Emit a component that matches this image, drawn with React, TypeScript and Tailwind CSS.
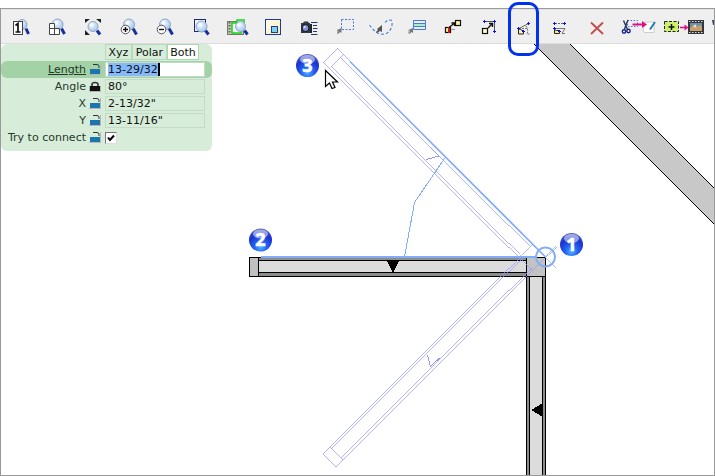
import { useEffect, useRef, type ReactNode } from 'react'

function Lens({ x, y, hx, hy, r = 5 }: { x: number; y: number; hx: number; hy: number; r?: number }) {
  return (
    <g>
      <line x1={x + 4} y1={y + 4} x2={hx - 1} y2={hy - 1} stroke="#15309a" strokeWidth="3" />
      <circle cx={x} cy={y} r={r} fill="url(#glass)" stroke="#90a4c8" strokeWidth="1" />
      <circle cx={x - 1.5} cy={y - 1.5} r="1.8" fill="#fff" opacity="0.8" />
    </g>
  )
}

function Plus({ x, y }: { x: number; y: number }) {
  return (
    <g fill="#0a12e8" shapeRendering="crispEdges">
      <rect x={x - 1} y={y} width="3" height="1" />
      <rect x={x} y={y - 1} width="1" height="3" />
    </g>
  )
}

function MiniCursor({ x, y }: { x: number; y: number }) {
  return (
    <g>
      <path d={`M${x + 5} ${y}v5l-1.5-1-2 2-1.2-1.2 1.8-1.8-1.6-1z`} fill="#777" />
      <path d={`M${x + 1} ${y + 1.5}v4`} stroke="#aaa" />
    </g>
  )
}

type Tool = { name: string; wide?: boolean; ringed?: boolean; art: ReactNode }

const tools: Tool[] = [
  {
    name: 'Actual size',
    art: (
      <>
        <Lens x={13} y={9.5} hx={20.5} hy={20} />
        <rect x="4.5" y="6.5" width="9" height="13" fill="#fff" stroke="#444" />
        <path d="M6.5 10.5l2.5-2v8.5M6.5 17h5" stroke="#111" strokeWidth="1.7" fill="none" />
      </>
    ),
  },
  {
    name: 'Zoom grid',
    art: (
      <>
        <Lens x={12.5} y={9.5} hx={20.5} hy={20} r={5.5} />
        <path d="M4.5 8.5h5v5h5v6h-10zM9.5 13.5v6M4.5 13.5h5" fill="#fff" stroke="#444" />
      </>
    ),
  },
  {
    name: 'Fit in window',
    art: (
      <>
        <Lens x={12} y={11.5} hx={20} hy={20.5} />
        <path d="M4 4h5l-5 4zM20 4h-5l5 4zM4 20v-5l5 5z" fill="#222" />
      </>
    ),
  },
  {
    name: 'Zoom in',
    art: (
      <>
        <Lens x={12} y={9.5} hx={20.5} hy={20.5} r={5.5} />
        <circle cx="8.5" cy="14.5" r="4.3" fill="#fff" stroke="#555" />
        <path d="M6 14.5h5M8.5 12v5" stroke="#111" strokeWidth="1.4" />
      </>
    ),
  },
  {
    name: 'Zoom out',
    art: (
      <>
        <Lens x={12} y={9.5} hx={20.5} hy={20.5} r={5.5} />
        <circle cx="8.5" cy="14.5" r="4.3" fill="#fff" stroke="#555" />
        <path d="M6 14.5h5" stroke="#111" strokeWidth="1.4" />
      </>
    ),
  },
  {
    name: 'Zoom window',
    art: (
      <>
        <rect x="5.5" y="4.5" width="11" height="12" fill="#f4f6ff" stroke="#1b2a70" />
        <Lens x={12.5} y={11.5} hx={20.5} hy={20.5} r={5.5} />
      </>
    ),
  },
  {
    name: 'Zoom plan view',
    art: (
      <>
        <rect x="2.5" y="6.5" width="16" height="13" fill="#c9c8b4" stroke="#77786a" />
        <path d="M4.5 7v12" stroke="#666" strokeWidth="2" strokeDasharray="1.5 1.5" />
        <rect x="7" y="8" width="9" height="10" fill="#f5fff2" stroke="#12d61c" strokeWidth="1.5" />
        <rect x="12" y="5" width="7" height="6" fill="#f5fff2" stroke="#12d61c" strokeWidth="1.5" />
        <Lens x={15.5} y={11.5} hx={23.5} hy={20.5} r={5} />
      </>
    ),
  },
  {
    name: 'Overview',
    art: (
      <>
        <rect x="4.5" y="4.5" width="15" height="15" fill="url(#cream)" stroke="#1d3d91" />
        <rect x="10.5" y="11.5" width="6" height="6" fill="#79d2f2" stroke="#1d3d91" />
      </>
    ),
  },
  {
    name: 'Camera',
    art: (
      <>
        <path d="M4 8h2l1-1.500h4l1 1.500h1v10h-9z" fill="#333a45" />
        <path d="M13 9h2v9h-2z" fill="#23262c" />
        <circle cx="8.500" cy="13" r="3.500" fill="#7f94dc" stroke="#111" />
        <circle cx="7.500" cy="12" r="1" fill="#e8edff" />
        <path d="M14 7.500h6.500M16 10.500h4M16 13.500h4.500M16 16.500h4M14 19.500h6.500" stroke="#26396b" />
      </>
    ),
  },
  {
    name: 'Select area',
    art: (
      <>
        <rect x="8.500" y="4.500" width="12" height="10" fill="none" stroke="#4b76df" strokeDasharray="2 1.500" />
        <MiniCursor x={3.5} y={13} />
      </>
    ),
  },
  {
    name: 'Select with lasso',
    art: (
      <>
        <path d="M.5 10c3 4 6 8 11 9 5 1 9-1 11-7 1-3 1-7-1-7-3 0-5 1-6 4" fill="none" stroke="#4b84df" strokeWidth="1.200" strokeDasharray="3 2" />
        <path d="M13 10v7l-2-1-3 2-1-1 2-2-1-1z" fill="#555" />
      </>
    ),
  },
  {
    name: 'Select rows',
    art: (
      <>
        <path d="M8.500 5.500h12v9h-12z" fill="#e9f1ff" stroke="#4b78dc" />
        <path d="M8.500 8.500h12v3h-12z" fill="#a9efc9" stroke="#4b78dc" />
        <MiniCursor x={3} y={13} />
      </>
    ),
  },
  {
    name: 'Stretch',
    art: (
      <>
        <rect x="4.500" y="12.500" width="5" height="5" fill="#ffef9a" stroke="#111" strokeWidth="1.200" />
        <rect x="7" y="12" width="2" height="6" fill="#d8151b" />
        <rect x="14.500" y="5.500" width="5" height="5" fill="#fff5a0" stroke="#111" strokeWidth="1.200" />
        <path d="M8 12.500l5-4M10.500 8h3v3" stroke="#111" strokeWidth="1.300" fill="none" />
        <path d="M10 14.500h4" stroke="#999" />
      </>
    ),
  },
  {
    name: 'Move by distance',
    art: (
      <>
        <path d="M7 6.500h10.500v10" fill="none" stroke="#555" />
        <Plus x={7} y={6} />
        <Plus x={17} y={6} />
        <Plus x={17} y={16} />
        <rect x="5.500" y="13.500" width="5" height="5" fill="#fffbd0" stroke="#111" strokeWidth="1.200" />
        <path d="M11 13l4.500-4.500M12 8.500h3.500v3.500" fill="none" stroke="#111" strokeWidth="1.400" />
      </>
    ),
  },
  {
    name: 'Rotate',
    ringed: true,
    art: (
      <>
        <path d="M6 13.500l9.500-5" fill="none" stroke="#666" />
        <path d="M6 13.500h8M13 11c2 2 2 5 1 8h2.500" fill="none" stroke="#777" strokeDasharray="2 1" />
        <path d="M5.500 14v5h5v-3l-3-1.500z" fill="#fff2a0" stroke="#222" />
        <Plus x={5} y={13} />
        <Plus x={15} y={8} />
        <Plus x={10} y={16} />
      </>
    ),
  },
  {
    name: 'Align',
    art: (
      <>
        <path d="M6 8.500h10" stroke="#666" strokeDasharray="2 1" />
        <path d="M6 13.500h10l-3 5h3" fill="none" stroke="#777" />
        <path d="M5.500 14.500v4h5v-3h-3z" fill="#ffe95e" stroke="#222" />
        <Plus x={5} y={8} />
        <Plus x={15} y={8} />
        <Plus x={5} y={13} />
        <Plus x={10} y={16} />
      </>
    ),
  },
  { name: 'Delete', art: <path d="M6 7.500l12 11.500M18 7.500l-12 11.500" stroke="#c24b4b" strokeWidth="1.800" /> },
  {
    name: 'Cut to sheet',
    wide: true,
    art: (
      <>
        <rect x="12.500" y="5.500" width="10" height="6" fill="none" stroke="#4b76df" strokeDasharray="1.500 1.500" />
        <path d="M8.500 5.500l4 9M13 5l-3.500 9" stroke="#26345c" strokeWidth="1.400" />
        <circle cx="9" cy="16.500" r="1.700" fill="none" stroke="#16248a" strokeWidth="1.400" />
        <circle cx="13.500" cy="16" r="1.700" fill="none" stroke="#16248a" strokeWidth="1.400" />
        <path d="M30 7h9v10.500h-10l-1-2z" fill="#fff" stroke="#ccc" />
        <path d="M40 7l-5 7.500" stroke="#2080b0" strokeWidth="2" />
        <path d="M17.500 9.500h10" stroke="#e0108a" strokeWidth="2" />
        <path d="M27 6l5 3.500-5 3.500z" fill="#e0108a" />
      </>
    ),
  },
  {
    name: 'Copy to movie',
    wide: true,
    art: (
      <>
        <rect x="3.500" y="6.500" width="14" height="10" fill="#cdf06b" stroke="#222" strokeDasharray="3 1.500" />
        <path d="M7.500 12h6M10.500 9v6" stroke="#111" strokeWidth="1.500" />
        <path d="M19 12.500h5" stroke="#e0108a" strokeWidth="1.600" />
        <path d="M23.500 9.500l4 3-4 3z" fill="#e0108a" />
        <rect x="27" y="5" width="16" height="14" fill="#35353a" />
        <path d="M28 6.500h15M28 17.500h15" stroke="#ddd" strokeDasharray="1.500 1.500" />
        <rect x="29" y="8" width="12" height="8" fill="#6c8fab" />
        <path d="M29 16v-3l4-3 3 2 3-2 2 2v4z" fill="#c9a06c" />
        <circle cx="34" cy="11" r="1.500" fill="#eedcc0" />
      </>
    ),
  },
]

function ToolButton({ tool }: { tool: Tool }) {
  const w = tool.wide ? 46 : 24
  return (
    <button
      type="button"
      aria-label={tool.name}
      className={`relative flex h-6 shrink-0 items-center justify-center ${tool.wide ? 'w-[46px]' : 'w-9'}`}
    >
      <svg width={w} height="24" viewBox={`0 0 ${w} 24`} aria-hidden="true">
        {tool.art}
      </svg>
      {tool.ringed && (
        <span className="absolute -top-[13px] left-px z-10 h-[54px] w-[31px] rounded-[10px] border-3 border-[#0232ee]" />
      )}
    </button>
  )
}

function Lock({ closed }: { closed?: boolean }) {
  return (
    <svg width="12" height="13" viewBox="0 0 12 13" className="shrink-0" aria-hidden="true">
      {closed ? (
        <>
          <path d="M3 7V4.500Q3 2.500 6 2.500T9 4.500V7" fill="none" stroke="#333" strokeWidth="1.600" />
          <rect x="1" y="6" width="10" height="5" fill="#111" />
          <path d="M.5 6v5.500h11V6" fill="none" stroke="#b5b5b5" />
        </>
      ) : (
        <>
          <path d="M4 1.500h4q2 0 2 2V5" fill="none" stroke="#333" />
          <path d="M11.500 1v10M0 11.500h12" stroke="#b9b5be" />
          <rect x="1" y="6" width="10" height="5" fill="#1b76ad" />
        </>
      )}
    </svg>
  )
}

function Badge({ x, y, n }: { x: number; y: number; n: string }) {
  return (
    <g>
      <circle cx={x} cy={y} r="11.500" fill="url(#ball)" />
      <ellipse cx={x} cy={y - 6} rx="7.500" ry="4.500" fill="#fff" opacity="0.500" />
      <text
        x={x}
        y={y + 6}
        textAnchor="middle"
        fill="#fff"
        stroke="#fff"
        strokeWidth="0.600"
        className="font-['Open_Sans',sans-serif] text-[18px] font-bold"
      >
        {n}
      </text>
    </g>
  )
}

function Drawing() {
  return (
    <svg className="block h-auto w-full" viewBox="1 44 713 431" role="img" aria-label="Wall plan">
      <defs>
        <radialGradient id="ball" cx="0.5" cy="0.8" r="0.8">
          <stop offset="0" stopColor="#4db4ff" />
          <stop offset="0.35" stopColor="#2460f2" />
          <stop offset="0.7" stopColor="#1a32cf" />
          <stop offset="1" stopColor="#5a68c4" />
        </radialGradient>
      </defs>
      <path d="M534 44H570L715 189V225Z" fill="#c8c8c8" />
      <path d="M534 44L715 225M570 44L715 189" stroke="#000" fill="none" shapeRendering="crispEdges" />

      <g shapeRendering="crispEdges">
        <rect x="526" y="276" width="20" height="200" fill="#000" />
        <rect x="527" y="277" width="2" height="200" fill="#8c8c8c" />
        <rect x="530" y="277" width="12" height="200" fill="#dcdcdc" />
        <rect x="543" y="277" width="2" height="200" fill="#8c8c8c" />
        <rect x="249" y="257" width="297" height="20" fill="#000" />
        <rect x="250" y="258" width="8" height="18" fill="#c0c0c0" />
        <rect x="259" y="258" width="267" height="2" fill="#8c8c8c" />
        <rect x="259" y="261" width="267" height="11" fill="#dcdcdc" />
        <rect x="259" y="273" width="267" height="3" fill="#8c8c8c" />
        <rect x="527" y="258" width="18" height="18" fill="#c3c3c3" />
        <path d="M387 261h12l-6 12zM543 403v14l-12-7z" fill="#000" />
      </g>

      <g fill="none" stroke="#9494ff" strokeWidth="0.700" shapeRendering="crispEdges">
        <path d="M531.500 269.500L323.500 61.500L337.500 47.500L351.500 61.500M343.500 53.500L330 67M331.500 65.500L519.500 253.500M340.500 56.500L529.500 245.500M531.500 244.500L519.500 256.500" />
        <path d="M519.500 257.500L323.500 453.500L336.500 466.500L556.500 246.500M330.500 446.500L343.500 459.500M331.500 448.500L523.500 256.500M341.500 457.500L531.500 267.500" />
      </g>
      <g fill="none" stroke="#9494ff" shapeRendering="crispEdges">
        <path d="M426.500 159.500L439 156L430 147" />
        <path d="M427.500 355L430.500 366.500L439.500 358" />
      </g>

      <g fill="none" stroke="#82acfa">
        <path d="M350 61.500L545 256.500" strokeWidth="1.600" />
        <path d="M261 257H536" strokeWidth="2" />
        <path d="M444.500 158.500L414.500 202.500L404.500 257" shapeRendering="crispEdges" />
        <path d="M545 257L556 268M545 257L556 246" strokeWidth="0.700" shapeRendering="crispEdges" />
        <circle cx="545.500" cy="257" r="9.500" strokeWidth="2" />
      </g>

      <Badge x={307.5} y={65.5} n="3" />
      <Badge x={260.5} y={240} n="2" />
      <Badge x={571.5} y={244.5} n="1" />
      <path d="M325.500 70.500v16l4-3.500 2.500 5.500 3-1-2.500-5.500h5z" fill="#fff" stroke="#000" strokeWidth="1.200" />
    </svg>
  )
}

const field = 'h-[15px] w-[100px] border border-[#c3dcc5] px-0.5 text-[#111]'

function Row({ id, label, locked, active, children }: {
  id: string
  label: string
  locked?: boolean
  active?: boolean
  children: ReactNode
}) {
  return (
    <div className={`flex h-[17px] items-center ${active ? 'rounded-md bg-[#a3d2a6]' : ''}`}>
      <label htmlFor={id} className={`w-[85px] shrink-0 text-right whitespace-nowrap ${active ? 'underline' : ''}`}>
        {label}
      </label>
      <span className="mr-1 ml-[3px] flex">
        <Lock closed={locked} />
      </span>
      {children}
    </div>
  )
}

function Tracker() {
  const length = useRef<HTMLInputElement>(null)
  useEffect(() => {
    length.current?.focus()
    length.current?.select()
  }, [])
  return (
    <form className="absolute top-0 left-0 w-[211px] rounded-md bg-[#d7edd9] pb-[5px] text-[11px] leading-[15px] text-[#263a28]">
      <div className="flex h-[17px] items-start pl-[104px] text-[#111]">
        <button type="button" className="h-4 w-[27px] border border-[#b9d9bc] text-center">Xyz</button>
        <button type="button" className="h-4 w-[35px] border border-[#b9d9bc] text-center">Polar</button>
        <button type="button" className="h-4 w-[32px] border border-[#a9d9ad] bg-white text-center">Both</button>
      </div>
      <Row id="length" label="Length" active>
        <span className="relative flex">
          <input
            id="length"
            ref={length}
            defaultValue="13-29/32"
            className={`${field} bg-white outline-none selection:bg-[#84b9fb] selection:text-[#111]`}
          />
          <span className="absolute top-px left-[53px] h-[13px] w-0.5 bg-black" />
        </span>
      </Row>
      <Row id="angle" label="Angle" locked>
        <input id="angle" defaultValue="80°" className={field} />
      </Row>
      <Row id="x" label="X">
        <input id="x" defaultValue={'2-13/32"'} className={field} />
      </Row>
      <Row id="y" label="Y">
        <input id="y" defaultValue={'13-11/16"'} className={field} />
      </Row>
      <Row id="connect" label="Try to connect">
        <span className="relative flex">
          <input
            id="connect"
            type="checkbox"
            defaultChecked
            className="peer size-3 appearance-none border border-t-[#777] border-r-[#ddd] border-b-[#ddd] border-l-[#777] bg-white"
          />
          <svg className="pointer-events-none absolute inset-0 hidden size-3 peer-checked:block" viewBox="0 0 12 12" aria-hidden="true">
            <path d="M3 5.500l2 2.500 4-4.500" fill="none" stroke="#000" strokeWidth="2" />
          </svg>
        </span>
      </Row>
    </form>
  )
}

export default function App() {
  return (
    <div className="bg-white pt-2 font-['DejaVu_Sans',Verdana,sans-serif]">
      <div className="border border-[#999]">
        <div role="toolbar" className="flex h-[35px] items-start border-y border-b-[#dcdcdc] border-t-[#e4e4e4] bg-[#efefef] pt-[5px] pl-0.5">
          <svg width="0" height="0" className="absolute" aria-hidden="true">
            <defs>
              <radialGradient id="glass" cx="0.4" cy="0.35" r="0.7">
                <stop offset="0" stopColor="#f2f9ff" />
                <stop offset="1" stopColor="#9cc3ea" />
              </radialGradient>
              <linearGradient id="cream" x1="0" y1="0" x2="1" y2="1">
                <stop offset="0" stopColor="#fffdf4" />
                <stop offset="1" stopColor="#ffe9ae" />
              </linearGradient>
            </defs>
          </svg>
          {tools.map((tool) => (
            <ToolButton key={tool.name} tool={tool} />
          ))}
          <button type="button" aria-label="More tools" className="h-6 min-w-0 flex-1 overflow-hidden pl-[5px]">
            <svg width="8" height="24" viewBox="0 0 8 24" aria-hidden="true">
              <path d="M0 5l5 0v5H1z" fill="#394468" />
            </svg>
          </button>
        </div>
        <div className="relative overflow-hidden">
          <Drawing />
          <Tracker />
        </div>
      </div>
    </div>
  )
}
